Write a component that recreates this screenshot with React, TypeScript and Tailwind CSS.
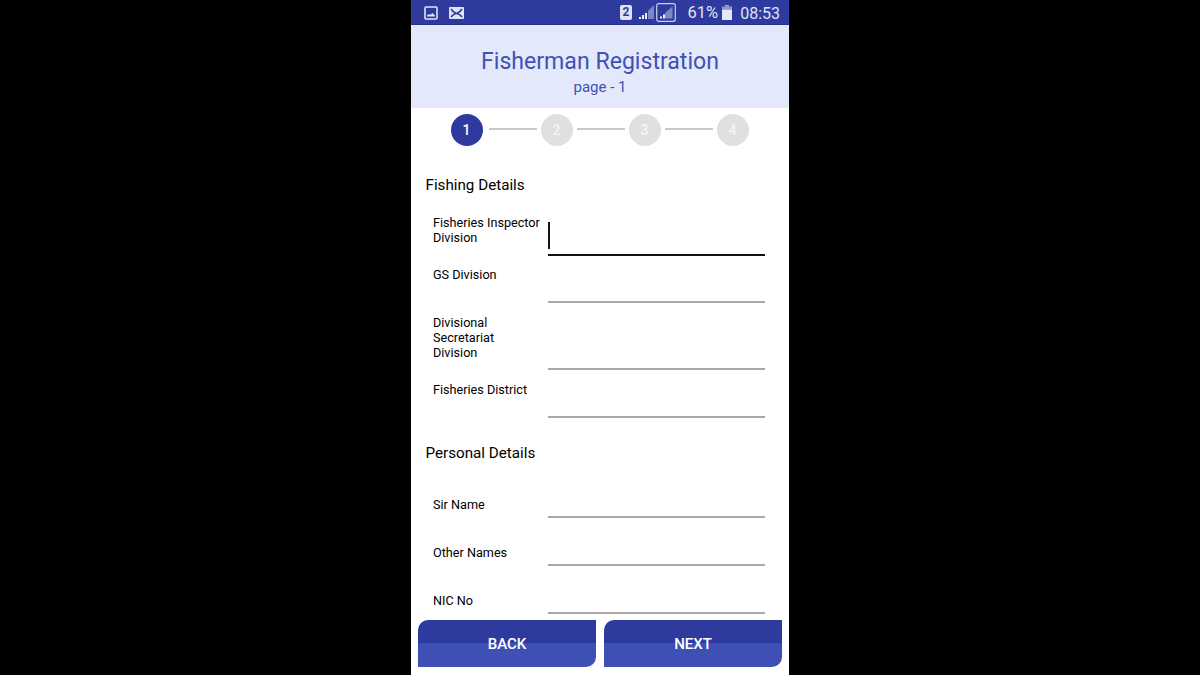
import React from 'react';

const font = { fontFamily: 'Roboto, sans-serif' };

const StatusBar = () => (
  <div className="h-[25px] shrink-0 bg-[#2f3a9e] border-b border-[#28318a] flex items-center justify-between text-[#dfe3f5] pl-[13px] pr-[9px]">
    <div className="flex items-center gap-[11px] mt-[2px]">
      <svg width="14" height="14" viewBox="0 0 14 14">
        <rect x="1" y="1" width="12" height="12" rx="1" fill="none" stroke="#dfe3f5" strokeWidth="1.6" />
        <path d="M3 10.5 L3 9.5 L5 8 L6.5 8.8 L8.5 7 L11 9.5 L11 10.5 Z" fill="#dfe3f5" />
      </svg>
      <svg width="15" height="12" viewBox="0 0 15 12">
        <rect width="15" height="12" rx="1" fill="#dfe3f5" />
        <path d="M2 2 Q5 6 7.5 6.5 Q10 6 13 2 M2 10 Q5 6.5 7.5 6.5 Q10 6.5 13 10" fill="none" stroke="#2f3a9e" strokeWidth="1.5" />
      </svg>
    </div>
    <div className="flex items-center">
      <div className="w-[12px] h-[15px] bg-[#dfe3f5] rounded-[2px] flex items-center justify-center text-[#2f3a9e] text-[12px] font-bold leading-none">2</div>
      <svg width="15" height="14" viewBox="0 0 15 14" className="ml-[7px]">
        <path d="M15 0 L15 14 L9 14 L9 6 Z" fill="#7f88c6" />
        <path d="M0 12h2v2H0zM3 10h2v4H3zM6 8h2v6H6z" fill="#eef0fa" />
      </svg>
      <svg width="20" height="19" viewBox="0 0 20 19" className="ml-[2px]">
        <rect x="0.7" y="0.7" width="18.6" height="17.6" rx="2" fill="none" stroke="#c9cfee" strokeWidth="1.2" />
        <path d="M16.5 3.5 L16.5 15.5 L9 15.5 L9 10 Z" fill="#7f88c6" />
        <path d="M4 13.5h2v2H4zM7 11.5h2v4H7z" fill="#eef0fa" />
      </svg>
      <span className="ml-[11.5px] mt-[3px] text-[16.5px] leading-none">61%</span>
      <svg width="10" height="15" viewBox="0 0 10 15" className="ml-[4px] mt-[1px]">
        <path d="M3 0h4v1.5H3z" fill="#aab0dc" />
        <path d="M0 1.5h10v3H0z" fill="#8f97d0" />
        <path d="M0 4.5h10V15H0z" fill="#e4e7f7" />
      </svg>
      <span className="ml-[8px] mt-[3px] text-[16px] leading-none">08:53</span>
    </div>
  </div>
);

const Header = () => (
  <div className="h-[83px] shrink-0 bg-[#e3e9fb] flex flex-col items-center pt-[21px] text-[#3f51b5]">
    <div className="text-[23.1px] leading-[32px]">Fisherman Registration</div>
    <div className="text-[15px] leading-[20px] -translate-y-[1px]">page - 1</div>
  </div>
);

const Step = ({ n, active }: { n: number; active?: boolean }) => (
  <div className={`w-[32px] h-[32px] rounded-full flex items-center justify-center text-[14px] font-medium pr-[1px] ${active ? 'bg-[#2f3a9e] text-white' : 'bg-[#e0e0e0] text-[#f5f5f5]'}`}>
    {n}
  </div>
);

const StepLine = () => <div className="w-[48px] h-[2px] bg-[#c8c8c8] -mt-[2px]" />;

const Stepper = () => (
  <div className="h-[44px] shrink-0 flex items-center pl-[40px]">
    <Step n={1} active />
    <div className="w-[6px]" />
    <StepLine />
    <div className="w-[4px]" />
    <Step n={2} />
    <div className="w-[4px]" />
    <StepLine />
    <div className="w-[4px]" />
    <Step n={3} />
    <div className="w-[4px]" />
    <StepLine />
    <div className="w-[4px]" />
    <Step n={4} />
  </div>
);

const Field = ({
  lines,
  height,
  top,
  focused,
}: {
  lines: string[];
  height: string;
  top: string;
  focused?: boolean;
}) => (
  <div className={`flex pl-[22px] pr-[24px] ${height}`}>
    <div className={`w-[115px] shrink-0 text-[12.65px] leading-[15px] text-black ${top}`}>
      {lines.map((l) => (
        <div key={l} className="whitespace-nowrap">{l}</div>
      ))}
    </div>
    <div className={`flex-1 flex items-end ${focused ? 'border-b-[2.5px] border-[#111]' : 'border-b-2 border-[#a8a8a8]'}`}>
      {focused && <div className="w-[2px] h-[27px] bg-[#111] mb-[5px]" />}
    </div>
  </div>
);

const Form = () => (
  <div className="flex-1 overflow-hidden">
    <div className="h-[57px] pl-[14.5px] pt-[21px] text-[15.2px] leading-[24px] text-black">Fishing Details</div>
    <Field lines={['Fisheries Inspector', 'Division']} height="h-[47px]" top="pt-[6px]" focused />
    <Field lines={['GS Division']} height="h-[47px]" top="pt-[11px]" />
    <Field lines={['Divisional', 'Secretariat', 'Division']} height="h-[67px]" top="pt-[12px]" />
    <Field lines={['Fisheries District']} height="h-[48px]" top="pt-[12px]" />
    <div className="h-[53px] pl-[14.5px] pt-[23px] text-[15.2px] leading-[24px] text-black">Personal Details</div>
    <Field lines={['Sir Name']} height="h-[47px]" top="pt-[26px]" />
    <Field lines={['Other Names']} height="h-[48px]" top="pt-[27px]" />
    <Field lines={['NIC No']} height="h-[48px]" top="pt-[27px]" />
  </div>
);

const NavButton = ({ label }: { label: string }) => (
  <div className="relative w-[178px] h-[47px] rounded-tl-[10px] rounded-br-[10px] overflow-hidden flex flex-col">
    <div className="h-[23px] bg-[#2f3a9e]" />
    <div className="flex-1 bg-[#3f50b4]" />
    <div className="absolute inset-0 pt-[2px] flex items-center justify-center text-white text-[15px] font-medium">{label}</div>
  </div>
);

export default function App() {
  return (
    <div className="w-[1200px] h-[675px] bg-black flex justify-center overflow-hidden" style={font}>
      <div className="w-[378px] h-[675px] bg-white flex flex-col">
        <StatusBar />
        <Header />
        <Stepper />
        <Form />
        <div className="h-[55px] shrink-0 flex gap-[8px] pl-[7px]">
          <NavButton label="BACK" />
          <NavButton label="NEXT" />
        </div>
      </div>
    </div>
  );
}
